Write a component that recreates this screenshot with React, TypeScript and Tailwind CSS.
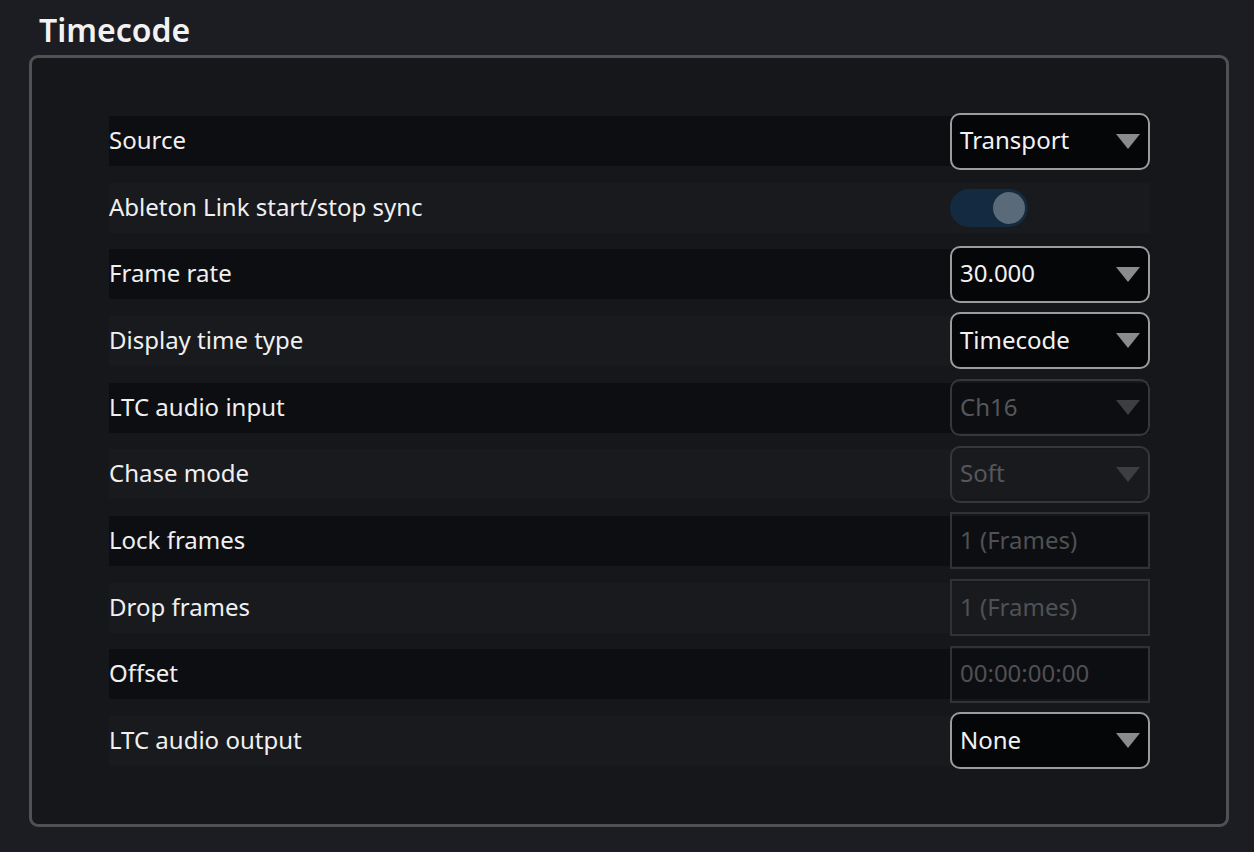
import { ReactNode } from "react";

type Field =
  | { kind: "select"; value: string; disabled?: boolean }
  | { kind: "toggle" }
  | { kind: "input"; value: string };

const rows: { label: string; field: Field }[] = [
  { label: "Source", field: { kind: "select", value: "Transport" } },
  { label: "Ableton Link start/stop sync", field: { kind: "toggle" } },
  { label: "Frame rate", field: { kind: "select", value: "30.000" } },
  { label: "Display time type", field: { kind: "select", value: "Timecode" } },
  { label: "LTC audio input", field: { kind: "select", value: "Ch16", disabled: true } },
  { label: "Chase mode", field: { kind: "select", value: "Soft", disabled: true } },
  { label: "Lock frames", field: { kind: "input", value: "1 (Frames)" } },
  { label: "Drop frames", field: { kind: "input", value: "1 (Frames)" } },
  { label: "Offset", field: { kind: "input", value: "00:00:00:00" } },
  { label: "LTC audio output", field: { kind: "select", value: "None" } },
];

function Caret({ disabled }: { disabled?: boolean }) {
  return (
    <svg width="24" height="15" viewBox="0 0 24 15" className="shrink-0">
      <path d="M0 0H24L12 15Z" fill={disabled ? "#3d3e42" : "#8a8b8a"} />
    </svg>
  );
}

function Select({ value, disabled }: { value: string; disabled?: boolean }) {
  return (
    <div
      className={
        disabled
          ? "flex h-[57px] w-[200px] items-center justify-between rounded-[10px] border-2 border-[#36373b] pl-[8px] pr-[8px] text-[#55575a]"
          : "flex h-[57px] w-[200px] items-center justify-between rounded-[10px] border-2 border-[#9c9c9c] bg-[#050608] pl-[8px] pr-[8px] text-[#f2f2f2]"
      }
    >
      <span className="pb-[2px]">{value}</span>
      <Caret disabled={disabled} />
    </div>
  );
}

function Toggle() {
  return (
    <div className="flex h-[38px] w-[78px] items-center justify-end rounded-full bg-[#142a40] pr-[3px]">
      <div className="size-[32px] rounded-full bg-[#5b6a79]" />
    </div>
  );
}

function TextInput({ value }: { value: string }) {
  return (
    <div className="flex h-[57px] w-[200px] items-center border-2 border-[#313236] pb-[2px] pl-[8px] text-[#4f5154]">
      {value}
    </div>
  );
}

function Row({ label, dark, children }: { label: string; dark: boolean; children: ReactNode }) {
  return (
    <div
      className={`flex h-[50px] items-center justify-between ${dark ? "bg-[#0d0e11]" : "bg-[#191a1e]"}`}
    >
      <span className="pb-[2px] text-[#f0f0f0]">{label}</span>
      {children}
    </div>
  );
}

export default function App() {
  return (
    <div
      className="min-h-[852px] bg-[#1b1d23] pl-[29px] pr-[25px] text-[24px]"
      style={{ fontFamily: '"Noto Sans", "Open Sans", sans-serif' }}
    >
      <h1 className="h-[55px] pl-[10px] pt-[14px] text-[32px] font-semibold leading-[32px] text-[#f2f2f2]">
        Timecode
      </h1>
      <section className="flex h-[772px] flex-col gap-[16.67px] rounded-[9px] border-[3px] border-[#505152] bg-[#16171b] py-[58px] pl-[77px] pr-[76px]">
        {rows.map((row, i) => (
          <Row key={row.label} label={row.label} dark={i % 2 === 0}>
            {row.field.kind === "select" ? (
              <Select value={row.field.value} disabled={row.field.disabled} />
            ) : row.field.kind === "toggle" ? (
              <div className="flex w-[200px] justify-start">
                <Toggle />
              </div>
            ) : (
              <TextInput value={row.field.value} />
            )}
          </Row>
        ))}
      </section>
    </div>
  );
}
